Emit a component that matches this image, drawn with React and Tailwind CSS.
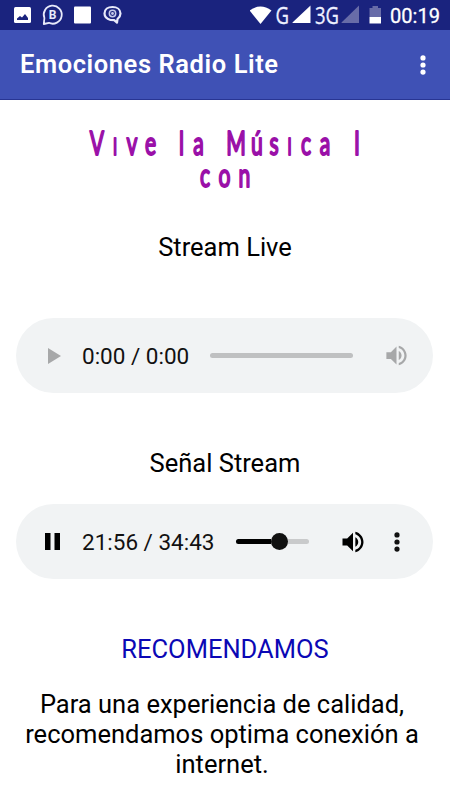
const VOLUME = "M3 9v6h4l5 5V4L7 9H3zm13.5 3c0-1.77-1.02-3.29-2.5-4.03v8.05c1.48-.73 2.5-2.25 2.5-4.02zM14 3.23v2.06c2.89.86 5 3.54 5 6.71s-2.11 5.85-5 6.71v2.06c4.01-.91 7-4.49 7-8.77s-2.99-7.86-7-8.77z";

function StatusBar() {
  return (
    <div className="flex h-[30px] items-center justify-between bg-[#1a237e] text-white">
      <svg width="130" height="30" viewBox="0 0 130 30">
        <rect x="14" y="7" width="17" height="16" rx="1.5" fill="#fff" />
        <path d="M17 20v-1.500l3-2.500 2 1.500 3-3.500 3 4v2z" fill="#1a237e" />
        <path d="M43.800 24l.6-6a9 9 0 1 1 4.500 4.800z" fill="none" stroke="#e8eafa" strokeWidth="1.8" strokeLinejoin="round" />
        <text x="52.6" y="19.3" textAnchor="middle" fontSize="12" fontWeight="700" fill="#e8eafa" className="font-['Roboto',sans-serif]">B</text>
        <rect x="74" y="6.5" width="17" height="17" rx="1" fill="#fff" />
        <path d="M110.500 20C106.500 18.800 104.500 16.500 104.500 13.500 104.500 9.300 108 7 112.500 7s8 2.500 8 6.500c0 2.500-1.300 4-3 5.500l-.5 3.600-2.800-2.500z" fill="none" stroke="#e8eafa" strokeWidth="2.2" strokeLinejoin="round" strokeLinecap="round" />
        <circle cx="112.500" cy="13.500" r="3.200" fill="none" stroke="#c5cae9" strokeWidth="1.5" />
        <circle cx="112.500" cy="13.500" r="1.400" fill="#c5cae9" />
      </svg>
      <svg width="200" height="30" viewBox="250 0 200 30" className="font-['Open_Sans',sans-serif]">
        <path d="M249.500 10.500Q260.500 2.500 271.500 10.500L260.500 24z" fill="#fff" />
        <text x="275.500" y="23.500" fontSize="23.500" textLength="13.500" lengthAdjust="spacingAndGlyphs" fill="#eef0ff" stroke="#eef0ff" strokeWidth=".3">G</text>
        <path d="M292.500 23V22.500L310.500 5.500V23z" fill="#fff" />
        <text x="315" y="23.500" fontSize="23.500" textLength="24" lengthAdjust="spacingAndGlyphs" fill="#eef0ff" stroke="#eef0ff" strokeWidth=".3">3G</text>
        <path d="M341.500 23V22.500L359 5.500V23z" fill="#686ca8" />
        <path d="M369.500 8h3V6h5.500v2h3v9h-11.500z" fill="#686ca8" />
        <path d="M369.500 17h11.500v6.500h-11.500z" fill="#fff" />
        <text x="390" y="22.500" fontSize="20.500" fontWeight="400" textLength="50" lengthAdjust="spacingAndGlyphs" fill="#fff" stroke="#fff" strokeWidth=".3" className="font-['Roboto',sans-serif]">00:19</text>
      </svg>
    </div>
  );
}

function Dots({ className }) {
  return (
    <svg className={className} width="8" height="24" viewBox="0 0 8 24" fill="currentColor">
      <circle cx="4" cy="4.900" r="2.600" />
      <circle cx="4" cy="12" r="2.600" />
      <circle cx="4" cy="19.100" r="2.600" />
    </svg>
  );
}

function Banner() {
  const first = "Vive la Música I";
  const xs = [97, 115, 132, 150.5, 166, 181.5, 198.5, 217, 236, 257, 274, 289.5, 306, 325, 341, 357];
  const second = "con";
  const xs2 = [205, 224.5, 244.5];
  const draw = (text, centers, y) => text.split("").map((c, i) => (
    <tspan key={i} x={centers[i] / 0.66} y={y} className={c === "i" ? "[font-variant:small-caps]" : ""}>{c}</tspan>
  ));
  return (
    <svg width="450" height="100" viewBox="0 0 450 100" className="block font-['Lato',sans-serif]">
      <g transform="scale(0.66 1)" fontSize="32" textAnchor="middle" fill="#9a10a8" stroke="#9a10a8" strokeWidth="2" strokeLinejoin="round">
        <text>{draw(first, xs, 55)}</text>
        <text>{draw(second, xs2, 87.5)}</text>
      </g>
    </svg>
  );
}

function Player({ children }) {
  return (
    <div className="ml-4 flex h-[75px] w-[417px] items-center rounded-full bg-[#f1f3f4] text-[22.5px] text-[#111]">
      {children}
    </div>
  );
}

export default function App() {
  return (
    <div className="h-[800px] w-[450px] overflow-hidden bg-white font-['Roboto',sans-serif] text-black">
      <StatusBar />
      <header className="flex h-[70px] items-center justify-between border-b border-[#283593] bg-[#3f51b5] pl-5 pr-[23px] text-white">
        <h1 className="whitespace-nowrap text-[25.5px] font-semibold tracking-[0.58px]">Emociones Radio Lite</h1>
        <Dots />
      </header>
      <main className="text-center text-[25.5px] leading-[30px]">
        <Banner />
        <h2 className="mt-[32px]">Stream Live</h2>
        <div className="mt-[56px]">
          <Player>
            <svg className="ml-[32px]" width="13" height="16" viewBox="0 0 13 16"><path d="M0 0l13 8-13 8z" fill="#a7a8a9" /></svg>
            <span className="ml-[21px] w-[128px] text-left">0:00 / 0:00</span>
            <div className="h-[5px] w-[143px] rounded-full bg-[#bfc0c1]" />
            <svg className="ml-[30px]" width="27" height="27" viewBox="0 0 24 24"><path d={VOLUME} fill="#a7a8a9" /></svg>
          </Player>
        </div>
        <h2 className="mt-[55px]">Señal Stream</h2>
        <div className="mt-[26px]">
          <Player>
            <svg className="ml-[29px]" width="15" height="17" viewBox="0 0 15 17"><path d="M0 0h5.500v17H0zM9.500 0h5.500v17h-5.500z" /></svg>
            <span className="ml-[22px] w-[154px] text-left">21:56 / 34:43</span>
            <div className="flex h-[5px] w-[73px] items-center rounded-full bg-[#c9cacb]">
              <div className="h-[5px] w-[35px] rounded-l-full bg-black" />
              <div className="size-[17px] shrink-0 rounded-full bg-[#111]" />
            </div>
            <svg className="ml-[30px]" width="28" height="28" viewBox="0 0 24 24"><path d={VOLUME} /></svg>
            <Dots className="ml-[26px]" />
          </Player>
        </div>
        <h2 className="mt-[55px] text-[#0b08b5]">RECOMENDAMOS</h2>
        <p className="mt-[25px] pr-1.5">
          Para una experiencia de calidad,<br />recomendamos optima conexión a<br />internet.
        </p>
      </main>
    </div>
  );
}
